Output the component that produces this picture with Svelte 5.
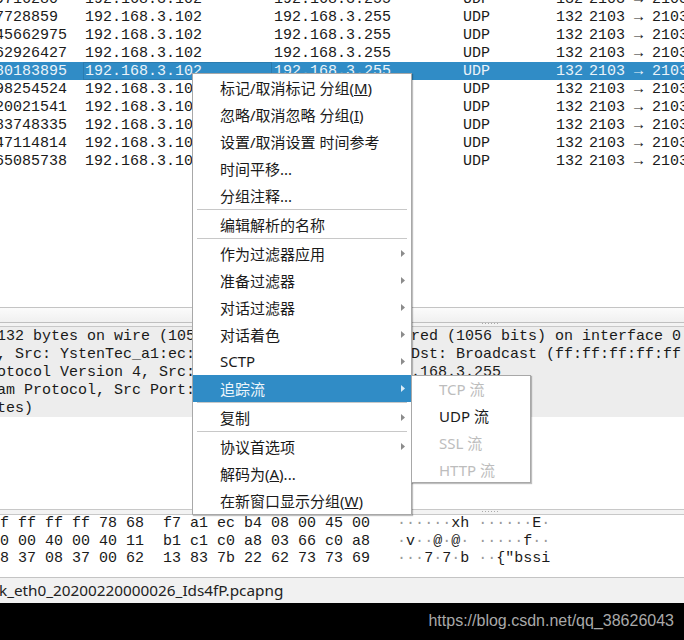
<script>
  const packets = [
    ['9716280', 0], ['7728859', 0], ['45662975', 0], ['62926427', 0], ['80183895', 1],
    ['98254524', 0], ['20021541', 0], ['83748335', 0], ['47114814', 0], ['65085738', 0]
  ];

  const details = [
    '132 bytes on wire (1056 bits), 132 bytes captured (1056 bits) on interface 0',
    ', Src: YstenTec_a1:ec:b4 (78:68:f7:a1:ec:b4), Dst: Broadcast (ff:ff:ff:ff:ff:ff)',
    'otocol Version 4, Src: 192.168.3.102, Dst: 192.168.3.255',
    'am Protocol, Src Port: 2103, Dst Port: 2103',
    'tes)'
  ];

  const hexRows = [
    ['f ff ff ff 78 68', 'f7 a1 ec b4 08 00 45 00', '······xh', '······E·'],
    ['0 00 40 00 40 11', 'b1 c1 c0 a8 03 66 c0 a8', '·v··@·@·', '·····f··'],
    ['8 37 08 37 00 62', '13 83 7b 22 62 73 73 69', '···7·7·b', '··{"bssi']
  ];

  const menu = [
    { label: '标记/取消标记 分组(', key: 'M', tail: ')' },
    { label: '忽略/取消忽略 分组(', key: 'I', tail: ')' },
    { label: '设置/取消设置 时间参考' },
    { label: '时间平移...' },
    { label: '分组注释...' },
    { sep: true },
    { label: '编辑解析的名称' },
    { sep: true },
    { label: '作为过滤器应用', sub: true },
    { label: '准备过滤器', sub: true },
    { label: '对话过滤器', sub: true },
    { label: '对话着色', sub: true },
    { label: 'SCTP', sub: true, latin: true },
    { label: '追踪流', sub: true, active: true },
    { sep: true },
    { label: '复制', sub: true },
    { sep: true },
    { label: '协议首选项', sub: true },
    { label: '解码为(', key: 'A', tail: ')...' },
    { label: '在新窗口显示分组(', key: 'W', tail: ')' }
  ];

  const follow = [
    { label: 'TCP 流', off: true },
    { label: 'UDP 流' },
    { label: 'SSL 流', off: true },
    { label: 'HTTP 流', off: true }
  ];
</script>

{#snippet ascii(text)}
  <span class="ascii">{#each [...text] as c}<span class:dim={c === '·'}>{c}</span>{/each}</span>
{/snippet}

<main>
  <section class="list">
    {#each packets as [time, selected]}
      <div class="row" class:selected={selected}>
        <span class="time">{time}</span>
        <span class="addr">192.168.3.102</span>
        <span class="addr">192.168.3.255</span>
        <span class="proto">UDP</span>
        <span class="len">132</span>
        <span class="info">2103 → 2103</span>
      </div>
    {/each}
  </section>

  <div class="bar"></div>
  <div class="grip"><i></i></div>

  <section class="details">
    <div class="tree">
      {#each details as line}
        <div class="line">{line}</div>
      {/each}
    </div>
  </section>

  <div class="grip low"><i></i></div>

  <section class="hex">
    {#each hexRows as [left, right, asciiLeft, asciiRight]}
      <div class="hexline">
        <span>{left}</span>
        <span class="right">{right}</span>
        {@render ascii(asciiLeft)}
        {@render ascii(asciiRight)}
      </div>
    {/each}
  </section>

  <footer class="status">k_eth0_20200220000026_Ids4fP.pcapng</footer>
  <div class="watermark">https://blog.csdn.net/qq_38626043</div>

  <div class="menu main-menu">
    {#each menu as item}
      {#if item.sep}
        <div class="sep"></div>
      {:else}
        <div class="item" class:active={item.active} class:latin={item.latin}>
          <span>{item.label}{#if item.key}<u>{item.key}</u>{item.tail}{/if}</span>
          {#if item.sub}
            <svg class="arrow" width="4" height="7" viewBox="0 0 4 7"><path d="M0 0L4 3.5L0 7Z" /></svg>
          {/if}
        </div>
      {/if}
    {/each}
  </div>

  <div class="menu sub-menu">
    {#each follow as item}
      <div class="item latin" class:off={item.off}>{item.label}</div>
    {/each}
  </div>
</main>

<style>
  :global(body) {
    margin: 0;
    background: #fff;
  }

  main {
    position: relative;
    width: 684px;
    height: 640px;
    overflow: hidden;
    display: flex;
    flex-direction: column;
    font-family: "Liberation Mono", monospace;
    font-size: 15px;
    color: #1a1a1a;
  }

  .list {
    height: 307px;
    flex: none;
    overflow: hidden;
  }

  .row {
    display: grid;
    grid-template-columns: 83px 189px 189px 85px 37px 1fr;
    height: 18px;
    line-height: 20px;
    white-space: pre;
  }

  .row:first-child {
    margin-top: -10px;
  }

  .row span {
    height: 18px;
    overflow: hidden;
    box-sizing: border-box;
  }

  .time {
    margin-left: -5px;
  }

  .addr {
    padding-left: 2px;
  }

  .proto {
    padding-left: 2px;
  }

  .len {
    text-align: right;
  }

  .info {
    padding-left: 6px;
  }

  .selected {
    background: #308cc6;
    color: #eaf3f9;
  }

  .selected .addr:nth-child(2) {
    box-shadow: inset 0 0 0 1px #2a7cb0;
  }

  .bar {
    height: 14px;
    flex: none;
    border-top: 1px solid #c4c4c4;
    border-bottom: 1px solid #bfbfbf;
    background: linear-gradient(#fbfbfb, #f0f0f0);
  }

  .grip {
    height: 3px;
    flex: none;
    background: #f3f3f3;
    border-bottom: 1px solid #c8c8c8;
    position: relative;
  }

  .grip.low {
    height: 4px;
    border-top: 1px solid #c8c8c8;
  }

  .grip i {
    position: absolute;
    left: 482px;
    top: 0;
    width: 16px;
    height: 1px;
    background: repeating-linear-gradient(90deg, #aaa 0 1px, transparent 1px 3px);
  }

  .grip.low i {
    top: 1px;
  }

  .details {
    height: 182px;
    flex: none;
    overflow: hidden;
  }

  .tree {
    background: #ededed;
  }

  .line {
    height: 18px;
    line-height: 20px;
    white-space: pre;
    margin-left: -3px;
  }

  .hex {
    height: 63px;
    flex: none;
    box-sizing: border-box;
    border-bottom: 1px solid #c4c4c4;
    overflow: hidden;
  }

  .hexline {
    display: flex;
    height: 17.5px;
    line-height: 17.5px;
    white-space: pre;
  }

  .right {
    margin-left: 19px;
  }

  .ascii {
    margin-left: 9px;
  }

  .right + .ascii {
    margin-left: 27px;
  }

  .dim {
    color: #9a9a9a;
  }

  .status {
    height: 25px;
    flex: none;
    background: #f1f1f1;
    font: 15.3px/25px "Noto Sans", sans-serif;
    color: #222;
    margin-left: -1px;
  }

  .watermark {
    flex: 1;
    background: #000;
    color: #a9a9a9;
    font: 16px/35px "Liberation Sans", sans-serif;
    text-align: right;
    padding-right: 10px;
  }

  .menu {
    position: absolute;
    box-sizing: border-box;
    background: #fff;
    border: 1px solid #a8a8a8;
    box-shadow: 1px 1px 1px rgba(0, 0, 0, 0.25);
    font-family: "Noto Sans", "Noto Sans CJK SC", sans-serif;
    font-size: 15px;
    color: #1a1a1a;
  }

  .main-menu {
    left: 192px;
    top: 73px;
    width: 220px;
  }

  .sub-menu {
    left: 411px;
    top: 375px;
    width: 120px;
    height: 108px;
  }

  .item {
    position: relative;
    height: 27px;
    line-height: 28px;
    padding-left: 27px;
    white-space: pre;
  }

  .item.latin {
    line-height: 26px;
  }

  .active {
    background: #308cc6;
    color: #eef6fb;
  }

  .off {
    color: #bdbdbd;
  }

  .arrow {
    position: absolute;
    right: 6px;
    top: 10px;
    fill: #8c8c8c;
  }

  .active .arrow {
    fill: #dcecf6;
  }

  .sep {
    height: 1px;
    margin: 0 4px 1px;
    background: #c8c8c8;
  }
</style>
